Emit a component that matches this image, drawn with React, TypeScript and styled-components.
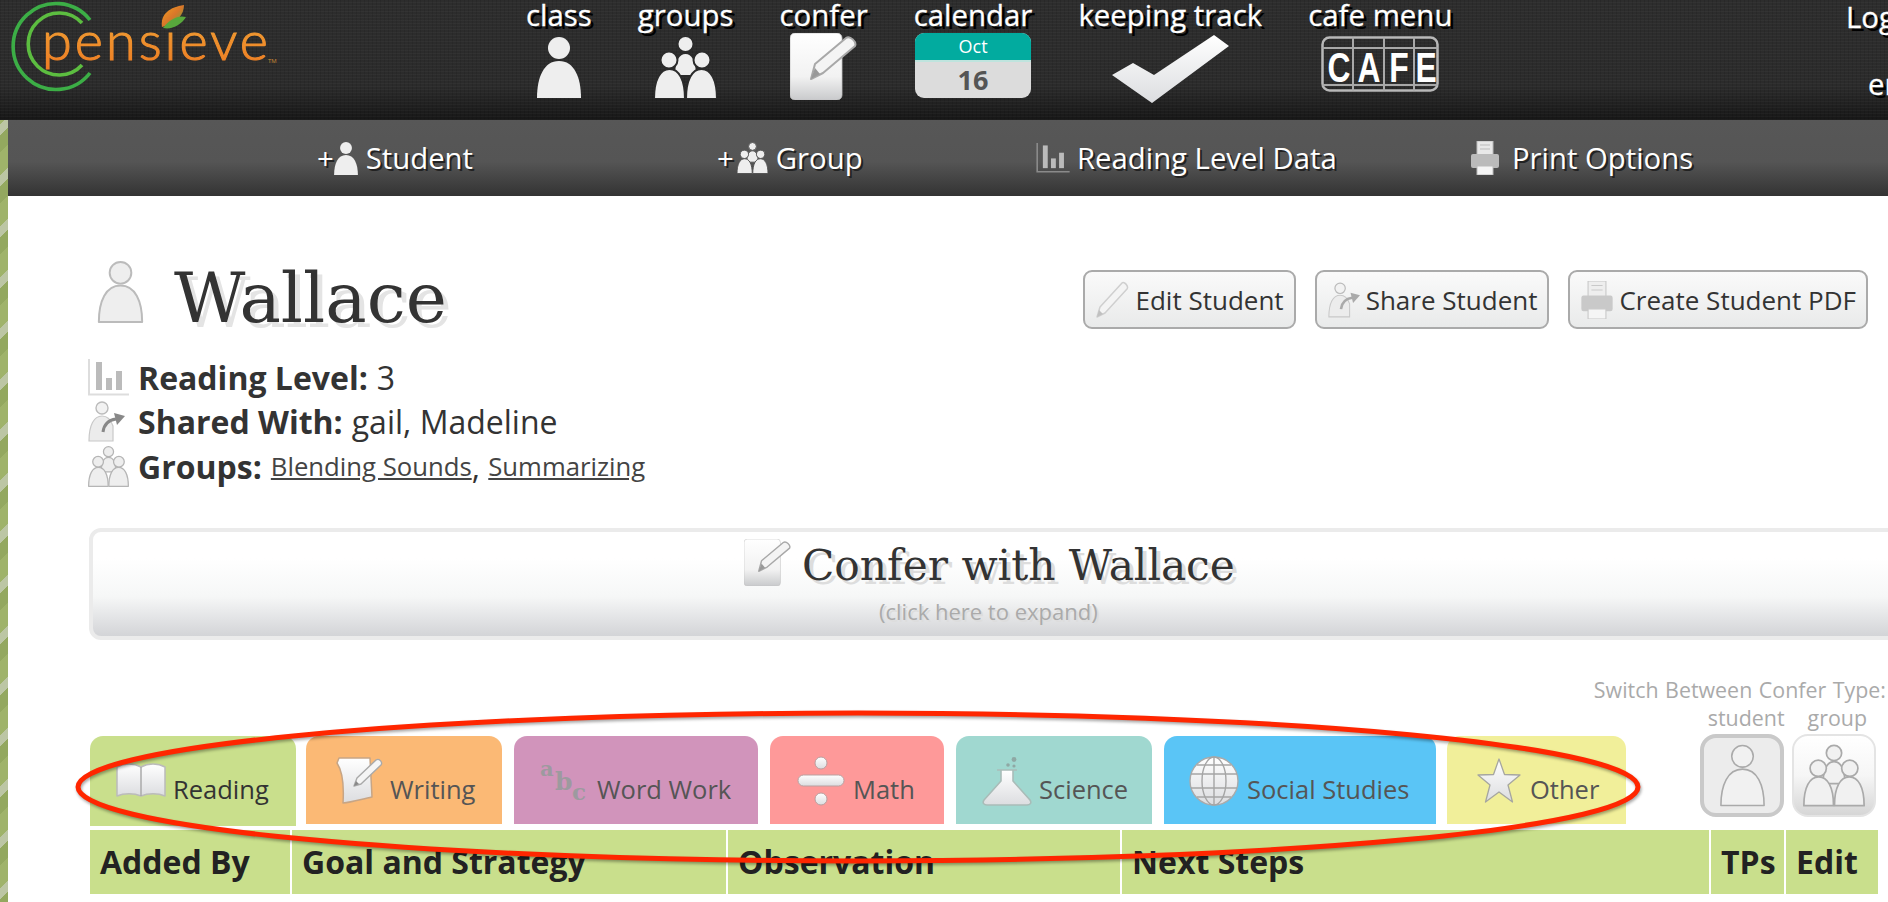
import React from "react";
import styled, { createGlobalStyle } from "styled-components";

const Global = createGlobalStyle`
  html, body { margin: 0; padding: 0; width: 1888px; height: 902px; overflow: hidden; background: #fff; }
  body { font-family: "Open Sans", "DejaVu Sans", sans-serif; color: #333; }
  svg { display: block; }
`;

const Page = styled.div`
  position: relative;
  width: 1888px;
  height: 902px;
  overflow: hidden;
  background: repeating-linear-gradient(135deg, #9fb36a 0 16px, #bcc6a4 16px 24px, #93a85f 24px 36px);
`;

const Header = styled.header`
  display: flex;
  height: 120px;
  background-image:
    repeating-linear-gradient(0deg, rgba(255,255,255,.028) 0 1px, transparent 1px 3px),
    repeating-linear-gradient(90deg, rgba(0,0,0,.1) 0 1px, transparent 1px 4px),
    linear-gradient(#2d2d2d 0, #2b2b2b 72%, #171717 100%);
`;

const LogoBox = styled.div`
  width: 526px;
  flex: none;
`;

const Nav = styled.nav`
  display: flex;
  gap: 46px;
  flex: none;
`;

const NavItem = styled.a`
  display: flex;
  flex-direction: column;
  align-items: center;
`;

const NavLabel = styled.span`
  font-size: 29.4px;
  line-height: 30px;
  color: #fff;
  white-space: nowrap;
  text-shadow: 3px 3px 0 #000;
  -webkit-text-stroke: .3px #fff;
`;

const NavIcon = styled.div<{ $top: number }>`
  margin-top: ${(p) => p.$top}px;
`;

const Calendar = styled.div`
  width: 116px;
  height: 65px;
  border-radius: 9px;
  overflow: hidden;
  background: #dcdcdc;
  display: flex;
  flex-direction: column;
  align-items: center;
`;

const CalMonth = styled.div`
  align-self: stretch;
  height: 27px;
  background: #02ab9f;
  border-bottom: 2px solid #bfe4de;
  color: #fff;
  font-size: 18px;
  line-height: 27px;
  text-align: center;
`;

const CalDay = styled.div`
  color: #555;
  font-size: 27px;
  font-weight: 700;
  line-height: 36px;
`;

const LoginBox = styled.div`
  margin-left: auto;
  padding-top: 2px;
  width: 42px;
  flex: none;
  display: flex;
  flex-direction: column;
  overflow: hidden;
  color: #fff;
  font-size: 29.4px;
  line-height: 30px;
  text-shadow: 3px 3px 0 #000;
  -webkit-text-stroke: .3px #fff;
`;

const LoginLine = styled.span<{ $indent?: number; $gap?: number }>`
  padding-left: ${(p) => p.$indent ?? 0}px;
  margin-top: ${(p) => p.$gap ?? 0}px;
  white-space: nowrap;
`;

const Main = styled.main`
  margin-left: 8px;
  height: 782px;
  background: #fff;
  overflow: hidden;
`;

const SubBar = styled.div`
  display: grid;
  grid-template-columns: 400px 319px 435px auto;
  align-items: center;
  height: 76px;
  padding-left: 309px;
  background: linear-gradient(#575757 0, #555 55%, #333 100%);
`;

const SubItem = styled.a`
  display: flex;
  align-items: center;
  color: #fff;
  font-size: 29.3px;
  line-height: 38px;
  text-shadow: 2px 2px 0 #222;
  white-space: nowrap;
`;

const SubIcon = styled.span<{ $w: number; $gap: number; $left?: number }>`
  flex: none;
  width: ${(p) => p.$w}px;
  margin-left: ${(p) => p.$left ?? 0}px;
  margin-right: ${(p) => p.$gap}px;
`;

const Content = styled.div`
  padding-left: 80px;
`;

const StudentHead = styled.section`
  display: flex;
  margin-top: 64px;
  height: 70px;
`;

const HeadIcon = styled.div`
  margin-left: 8px;
  width: 49px;
`;

const Title = styled.h1`
  margin: -8px 0 0 29px;
  font-family: "DejaVu Serif", serif;
  font-weight: 400;
  font-size: 69.5px;
  line-height: 92px;
  color: #333;
  text-shadow: 5px 5px 0 #e4e4e4;
`;

const HeadActions = styled.div`
  display: flex;
  gap: 19px;
  margin: 10px 20px 0 auto;
`;

const ActionButton = styled.button`
  display: flex;
  align-items: center;
  height: 59px;
  padding: 0 10px 0 11px;
  border: 2px solid #aaa;
  border-radius: 9px;
  background: linear-gradient(#fafafa, #e9eaea);
  font-family: inherit;
  font-size: 26px;
  color: #333;
  white-space: nowrap;
`;

const ActionIcon = styled.span`
  flex: none;
  margin-right: 6px;
`;

const Meta = styled.section`
  margin-top: 25px;
`;

const MetaRow = styled.div`
  display: flex;
  align-items: center;
  height: 44.5px;
  font-size: 32px;
  color: #333;
  white-space: nowrap;
`;

const MetaIcon = styled.span`
  flex: none;
  width: 50px;
`;

const MetaKey = styled.strong`
  font-weight: 700;
  margin-right: 9px;
`;

const MetaLink = styled.a`
  font-size: 25.7px;
  color: #444;
  text-decoration: underline;
`;

const ConferBox = styled.section`
  box-sizing: border-box;
  width: 1830px;
  height: 112px;
  margin: 39px 0 0 1px;
  border: 4px solid #ebebeb;
  border-radius: 12px;
  background: linear-gradient(#fff 0, #fff 25%, #f6f7f7 62%, #d3d4d7 100%);
  padding-left: 651px;
`;

const ConferLine = styled.div`
  display: flex;
  align-items: flex-start;
  padding-top: 7px;
`;

const ConferTitle = styled.h2`
  margin: -3px 0 0 11px;
  font-family: "DejaVu Serif", serif;
  font-weight: 400;
  font-size: 42.3px;
  line-height: 60px;
  color: #333;
  text-shadow: 4px 4px 0 #ddd;
  white-space: nowrap;
`;

const ConferHint = styled.div`
  margin: 2px 0 0 135px;
  font-size: 22px;
  line-height: 26px;
  color: #aaa;
  text-shadow: 2px 2px 0 #ddd;
`;

const TabArea = styled.section`
  display: flex;
  align-items: flex-end;
  height: 146px;
  margin-top: 40px;
  margin-left: 2px;
`;

const Tabs = styled.div`
  display: flex;
  flex: none;
  align-items: flex-start;
  gap: 12px;
  align-self: flex-end;
  height: 90px;
`;

const Tab = styled.a<{ $bg: string; $w: number; $pl: number; $active?: boolean; $shift?: number }>`
  box-sizing: border-box;
  display: flex;
  align-items: center;
  width: ${(p) => p.$w}px;
  height: ${(p) => (p.$active ? 90 : 88)}px;
  margin-left: ${(p) => p.$shift ?? 0}px;
  padding-left: ${(p) => p.$pl}px;
  padding-top: 2px;
  padding-bottom: ${(p) => (p.$active ? 2 : 0)}px;
  border-radius: 13px 13px 0 0;
  background: ${(p) => p.$bg};
  font-size: 25.5px;
  color: ${(p) => (p.$active ? "#333" : "#555")};
  white-space: nowrap;
`;

const TabIcon = styled.span<{ $gap: number }>`
  flex: none;
  margin-right: ${(p) => p.$gap}px;
`;

const TabLabel = styled.span`
  margin-top: 16px;
  line-height: 34px;
`;

const Switcher = styled.div`
  margin-left: auto;
  margin-right: 2px;
  margin-bottom: 9px;
  display: flex;
  flex-direction: column;
  align-items: flex-end;
  width: 186px;
  color: #aaa;
  font-size: 21.4px;
`;

const SwitchTitle = styled.div`
  line-height: 26px;
  word-spacing: 1px;
  white-space: nowrap;
`;

const SwitchNames = styled.div`
  display: flex;
  gap: 23px;
  margin: 2px 19px 3px 0;
  line-height: 26px;
`;

const SwitchButtons = styled.div`
  display: flex;
  gap: 8px;
  margin-right: 10px;
`;

const SwitchButton = styled.button<{ $on?: boolean }>`
  box-sizing: border-box;
  display: flex;
  align-items: center;
  justify-content: center;
  width: 84px;
  height: 83px;
  padding: 0;
  border-radius: 16px;
  border: ${(p) => (p.$on ? "4px solid #c9c9c9" : "2px solid #e4e4e4")};
  background: ${(p) => (p.$on ? "#ececec" : "linear-gradient(#fff 0, #f6f6f6 50%, #d6d6d6 100%)")};
`;

const HeadRow = styled.div`
  display: grid;
  grid-template-columns: 200px 434px 392px 587px 73px 92px;
  gap: 2px;
  width: 1788px;
  margin: 4px 0 0 2px;
`;

const HeadCell = styled.div`
  height: 64px;
  padding-left: 10px;
  background: #c9df8c;
  color: #222;
  font-size: 32px;
  font-weight: 700;
  line-height: 64px;
  white-space: nowrap;
`;

const Annotation = styled.svg`
  position: absolute;
  left: 0;
  top: 0;
  pointer-events: none;
  filter: drop-shadow(1px 2px 1.5px rgba(0, 0, 0, .35));
`;

const DefsHolder = styled.svg`
  position: absolute;
  width: 0;
  height: 0;
`;

/* ---------- drawings ---------- */

const Defs = () => (
  <DefsHolder aria-hidden>
    <defs>
      <linearGradient id="gw" x1="0" y1="0" x2="0" y2="1">
        <stop offset="0" stopColor="#ffffff" />
        <stop offset=".65" stopColor="#f2f2f2" />
        <stop offset="1" stopColor="#c9cacc" />
      </linearGradient>
      <linearGradient id="gc" x1="0" y1="0" x2="0" y2="1">
        <stop offset="0" stopColor="#fff" />
        <stop offset="1" stopColor="#dcdde0" />
      </linearGradient>
      <linearGradient id="go" x1="0" y1="0" x2="0" y2="1">
        <stop offset="0" stopColor="#f0a838" />
        <stop offset="1" stopColor="#ee7a22" />
      </linearGradient>
      <linearGradient id="gl" x1="0" y1="0" x2="1" y2="1">
        <stop offset="0" stopColor="#f5a01e" />
        <stop offset=".5" stopColor="#d9772a" />
        <stop offset="1" stopColor="#4fae3c" />
      </linearGradient>
    </defs>
  </DefsHolder>
);

const Logo = () => (
  <svg width="290" height="100" viewBox="0 0 290 100">
    <path d="M90 20 A43 43 0 1 0 90 73" fill="none" stroke="#3cae46" strokeWidth="3.6" />
    <path d="M82 23 A31 31 0 1 0 82 65" fill="none" stroke="#5cbd40" strokeWidth="3.6" />
    <text x="42" y="60" fontFamily="Lato, 'Open Sans', sans-serif" fontWeight="300" fontSize="54" letterSpacing="3" fill="url(#go)" stroke="url(#go)" strokeWidth="1.1">pensieve</text>
    <text x="268" y="63" fontFamily="'Open Sans', sans-serif" fontSize="6" fill="#c98a35">TM</text>
    <path d="M162 27 C160 14 170 7 184 5 C184 14 178 23 162 27Z" fill="url(#gl)" />
    <path d="M163 28 C170 19 178 15 186 17 C181 25 172 30 163 28Z" fill="#58a83c" />
  </svg>
);

const Person = ({ w = 44, h = 61, fill = "#eee", stroke = "none", sw = 0 }: { w?: number; h?: number; fill?: string; stroke?: string; sw?: number }) => (
  <svg width={w} height={h} viewBox={`${-sw} ${-sw} ${44 + 2 * sw} ${61 + 2 * sw}`}>
    <circle cx="22" cy="11" r="11" fill={fill} stroke={stroke} strokeWidth={sw} />
    <path d="M0 61 C0 40 7 24 22 24 C37 24 44 40 44 61Z" fill={fill} stroke={stroke} strokeWidth={sw} strokeLinejoin="round" />
  </svg>
);

const People = ({ w = 63, h = 63, fill = "#eee", stroke = "none", sw = 0, gap = "#2b2b2b" }: { w?: number; h?: number; fill?: string; stroke?: string; sw?: number; gap?: string }) => {
  const s = stroke === "none" ? gap : stroke;
  const lw = stroke === "none" ? 2 : sw;
  return (
    <svg width={w} height={h} viewBox={`${stroke === "none" ? 0 : -sw / 2} ${stroke === "none" ? 0 : -sw / 2} ${stroke === "none" ? 63 : 63 + sw} ${stroke === "none" ? 63 : 63 + sw}`}>
      <circle cx="31.5" cy="8" r="8" fill={fill} stroke={s} strokeWidth={lw} />
      <path d="M20 40 C20 24 25 17 31.5 17 C38 17 43 24 43 40Z" fill={fill} stroke={s} strokeWidth={lw} />
      <circle cx="15" cy="24" r="8.5" fill={fill} stroke={s} strokeWidth={lw} />
      <path d="M0 63 C0 44 6 33 15.5 33 C25 33 31 44 31 63Z" fill={fill} stroke={s} strokeWidth={lw} strokeLinejoin="round" />
      <circle cx="48" cy="24" r="8.5" fill={fill} stroke={s} strokeWidth={lw} />
      <path d="M32 63 C32 44 38 33 47.5 33 C57 33 63 44 63 63Z" fill={fill} stroke={s} strokeWidth={lw} strokeLinejoin="round" />
    </svg>
  );
};

const Pad = ({ w = 67, h = 67 }: { w?: number; h?: number }) => (
  <svg width={w} height={h} viewBox="0 0 67 67">
    <rect x="0" y="0" width="52" height="67" rx="5" fill="url(#gw)" stroke="#c4c4c4" strokeWidth=".8" />
    <path d="M21 46 L25 31 L56 5 C60 2 67 9 65 13 L33 40Z" fill="#f4f4f4" stroke="#a8a8a8" strokeWidth="2" strokeLinejoin="round" />
    <path d="M21 46 L25 35 L30 41Z" fill="#999" />
  </svg>
);

const Check = () => (
  <svg width="117" height="68" viewBox="0 0 117 68">
    <path d="M0 40 L21 28 L42 40 L102 0 L117 11 L40 68Z" fill="url(#gc)" />
  </svg>
);

const cafeLetters: [string, number][] = [["C", 18], ["A", 48], ["F", 78], ["E", 105]];

const Cafe = () => (
  <svg width="118" height="56" viewBox="0 0 118 56">
    <rect x="1.5" y="1.5" width="115" height="53" rx="7" fill="none" stroke="#b8b8b8" strokeWidth="2.5" />
    <path d="M1.5 12 H116.5 M1.5 49 H116.5 M32 1.5 V54.5 M63 1.5 V54.5 M93 1.5 V54.5" stroke="#a8a8a8" strokeWidth="2" fill="none" />
    {cafeLetters.map(([l, x]) => (
      <text key={l} transform={`translate(${x} 46) scale(.74 1)`} textAnchor="middle" fontFamily="'Liberation Sans', sans-serif" fontWeight="700" fontSize="43" fill="#fff">{l}</text>
    ))}
  </svg>
);

const Bars = ({ w = 41, h = 37, axis = "#ddd", bar = "#bbb" }: { w?: number; h?: number; axis?: string; bar?: string }) => (
  <svg width={w} height={h} viewBox="0 0 41 37">
    <path d="M1 0 V35.5 H41" fill="none" stroke={axis} strokeWidth="2" />
    <rect x="8" y="3" width="6" height="28" fill={bar} />
    <rect x="18" y="19" width="6" height="12" fill={bar} />
    <rect x="28" y="12" width="6" height="19" fill={bar} />
  </svg>
);

const Share = ({ w = 37, h = 41, arrow = "#888" }: { w?: number; h?: number; arrow?: string }) => (
  <svg width={w} height={h} viewBox="0 0 37 41">
    <circle cx="14" cy="7" r="6" fill="#f2f2f2" stroke="#bbb" strokeWidth="1.4" />
    <path d="M1 40 C1 24 6 15 14 15 C20 15 23 19 25 25 L25 40Z" fill="#ececec" stroke="#c8c8c8" strokeWidth="1.2" />
    <path d="M15 31 C16 23 21 19 28 18" fill="none" stroke={arrow} strokeWidth="3" />
    <path d="M26 12 L37 15 L29 24Z" fill={arrow} />
  </svg>
);

const Printer = ({ w = 28, h = 34, fill = "#e8e8e8", dark = "#bbb" }: { w?: number; h?: number; fill?: string; dark?: string }) => (
  <svg width={w} height={h} viewBox="0 0 28 34">
    <rect x="6" y="0" width="16" height="14" fill={fill} stroke={dark} />
    <path d="M9 4 H19 M9 8 H19" stroke={dark} />
    <rect x="0" y="13" width="28" height="14" rx="2" fill={dark} />
    <rect x="6" y="25" width="16" height="9" fill="#f5f5f5" stroke={dark} />
  </svg>
);

const Pencil = () => (
  <svg width="33" height="37" viewBox="0 0 33 37">
    <path d="M1 36 L4 26 L26 2 C28 0 33 5 31 8 L9 32Z" fill="#f4f4f4" stroke="#cfcfcf" strokeWidth="1.5" strokeLinejoin="round" />
    <path d="M1 36 L3 29 L7 33Z" fill="#c0c0c0" />
  </svg>
);

const Book = () => (
  <svg width="50" height="36" viewBox="0 0 50 36">
    <path d="M1 4 C8 0 18 0 25 4 C32 0 42 0 49 4 V33 C42 30 32 30 25 33 C18 30 8 30 1 33Z" fill="url(#gc)" stroke="#bbb" strokeWidth="1.5" strokeLinejoin="round" />
    <path d="M25 4 V33" stroke="#aaa" strokeWidth="1.5" />
  </svg>
);

const Paper = () => (
  <svg width="47" height="47" viewBox="0 0 47 47">
    <path d="M3 1 H34 L36 40 C26 42 16 45 7 46 C8 30 7 15 1 6Z" fill="url(#gc)" stroke="#c7a585" strokeWidth="1.5" strokeLinejoin="round" />
    <path d="M18 29 L21 21 L40 3 C43 1 47 5 45 8 L25 27Z" fill="#f5f5f5" stroke="#a9a9a9" strokeWidth="1.4" strokeLinejoin="round" />
    <path d="M18 29 L20 24 L23 27Z" fill="#888" />
  </svg>
);

const Abc = () => (
  <svg width="50" height="43" viewBox="0 0 50 43">
    <text x="0" y="17" fontFamily="'DejaVu Serif', serif" fontWeight="700" fontSize="21" fill="#9d9a9f">a</text>
    <text x="15" y="31" fontFamily="'DejaVu Serif', serif" fontWeight="700" fontSize="25" fill="#9d9a9f">b</text>
    <text x="32" y="41" fontFamily="'DejaVu Serif', serif" fontWeight="700" fontSize="23" fill="#9d9a9f">c</text>
  </svg>
);

const Divide = () => (
  <svg width="48" height="50" viewBox="0 0 48 50">
    <circle cx="24" cy="7" r="6" fill="url(#gc)" stroke="#b9a0a0" />
    <rect x="1" y="19" width="46" height="11" rx="5.5" fill="url(#gc)" stroke="#b9a0a0" />
    <circle cx="24" cy="43" r="6" fill="url(#gc)" stroke="#b9a0a0" />
  </svg>
);

const Flask = () => (
  <svg width="50" height="50" viewBox="0 0 50 50">
    <path d="M15 14 H35 M19 14 V25 L2 44 C0 47 2 49 5 49 H45 C48 49 50 47 48 44 L31 25 V14" fill="url(#gc)" stroke="#a9bcb8" strokeWidth="1.6" strokeLinejoin="round" />
    <circle cx="32" cy="3.5" r="2.4" fill="#8fa8a4" />
    <circle cx="26" cy="9" r="1.8" fill="#8fa8a4" />
    <circle cx="32" cy="10" r="1.6" fill="#8fa8a4" />
  </svg>
);

const Globe = () => (
  <svg width="50" height="50" viewBox="0 0 50 50">
    <circle cx="25" cy="25" r="24" fill="url(#gc)" stroke="#aaa" strokeWidth="1.4" />
    <path d="M25 1 V49 M2 18 H48 M2 32 H48 M8 9 H42 M8 41 H42" stroke="#a5a5a5" strokeWidth="1.4" fill="none" />
    <ellipse cx="25" cy="25" rx="12" ry="24" fill="none" stroke="#a5a5a5" strokeWidth="1.4" />
  </svg>
);

const Star = () => (
  <svg width="44" height="45" viewBox="0 0 44 45">
    <path d="M22 1 L27.5 16.5 L43 17 L31 27 L35.5 44 L22 34 L8.5 44 L13 27 L1 17 L16.5 16.5Z" fill="url(#gc)" stroke="#a6a6a0" strokeWidth="1.3" strokeLinejoin="round" />
  </svg>
);

const GW = "#eeeeee";

export default function App() {
  return (
    <Page>
      <Global />
      <Defs />
      <Header>
        <LogoBox>
          <Logo />
        </LogoBox>
        <Nav>
          <NavItem>
            <NavLabel>class</NavLabel>
            <NavIcon $top={7}><Person fill={GW} /></NavIcon>
          </NavItem>
          <NavItem>
            <NavLabel>groups</NavLabel>
            <NavIcon $top={6}><People fill={GW} /></NavIcon>
          </NavItem>
          <NavItem>
            <NavLabel>confer</NavLabel>
            <NavIcon $top={3}><Pad /></NavIcon>
          </NavItem>
          <NavItem>
            <NavLabel>calendar</NavLabel>
            <NavIcon $top={3}>
              <Calendar>
                <CalMonth>Oct</CalMonth>
                <CalDay>16</CalDay>
              </Calendar>
            </NavIcon>
          </NavItem>
          <NavItem>
            <NavLabel>keeping track</NavLabel>
            <NavIcon $top={5}><Check /></NavIcon>
          </NavItem>
          <NavItem>
            <NavLabel>cafe menu</NavLabel>
            <NavIcon $top={6}><Cafe /></NavIcon>
          </NavItem>
        </Nav>
        <LoginBox>
          <LoginLine>Log</LoginLine>
          <LoginLine $indent={22} $gap={37}>en</LoginLine>
        </LoginBox>
      </Header>
      <Main>
        <SubBar>
          <SubItem>
            +<SubIcon $w={24} $gap={8}><Person w={24} h={33} fill="#eee" /></SubIcon>Student
          </SubItem>
          <SubItem>
            +<SubIcon $w={31} $gap={8} $left={3}><People w={31} h={34} fill="#eee" gap="#555" /></SubIcon>Group
          </SubItem>
          <SubItem>
            <SubIcon $w={34} $gap={7}><Bars w={34} h={30} axis="#8a8a8a" bar="#bbb" /></SubIcon>Reading Level Data
          </SubItem>
          <SubItem>
            <SubIcon $w={28} $gap={13}><Printer /></SubIcon>Print Options
          </SubItem>
        </SubBar>
        <Content>
          <StudentHead>
            <HeadIcon>
              <Person w={49} h={64} fill="#eee" stroke="#bbb" sw={2} />
            </HeadIcon>
            <Title>Wallace</Title>
            <HeadActions>
              <ActionButton>
                <ActionIcon><Pencil /></ActionIcon>Edit Student
              </ActionButton>
              <ActionButton>
                <ActionIcon><Share w={32} h={38} arrow="#aaa" /></ActionIcon>Share Student
              </ActionButton>
              <ActionButton>
                <ActionIcon><Printer w={32} h={38} fill="#eee" dark="#c9c9c9" /></ActionIcon>Create Student PDF
              </ActionButton>
            </HeadActions>
          </StudentHead>
          <Meta>
            <MetaRow>
              <MetaIcon><Bars /></MetaIcon>
              <MetaKey>Reading Level:</MetaKey>3
            </MetaRow>
            <MetaRow>
              <MetaIcon><Share /></MetaIcon>
              <MetaKey>Shared With:</MetaKey>gail, Madeline
            </MetaRow>
            <MetaRow>
              <MetaIcon><People w={41} h={41} fill="#eee" stroke="#b5b5b5" sw={2} /></MetaIcon>
              <MetaKey>Groups:</MetaKey>
              <MetaLink>Blending Sounds</MetaLink>,&nbsp;<MetaLink>Summarizing</MetaLink>
            </MetaRow>
          </Meta>
          <ConferBox>
            <ConferLine>
              <Pad w={47} h={47} />
              <ConferTitle>Confer with Wallace</ConferTitle>
            </ConferLine>
            <ConferHint>(click here to expand)</ConferHint>
          </ConferBox>
          <TabArea>
            <Tabs>
              <Tab $bg="#c9df8c" $w={206} $pl={26} $active>
                <TabIcon $gap={7}><Book /></TabIcon><TabLabel>Reading</TabLabel>
              </Tab>
              <Tab $bg="#fbb975" $w={196} $pl={30} $shift={-2}>
                <TabIcon $gap={7}><Paper /></TabIcon><TabLabel>Writing</TabLabel>
              </Tab>
              <Tab $bg="#d194bb" $w={244} $pl={26}>
                <TabIcon $gap={7}><Abc /></TabIcon><TabLabel>Word Work</TabLabel>
              </Tab>
              <Tab $bg="#fe9999" $w={174} $pl={27}>
                <TabIcon $gap={8}><Divide /></TabIcon><TabLabel>Math</TabLabel>
              </Tab>
              <Tab $bg="#a0d8d0" $w={196} $pl={26}>
                <TabIcon $gap={7}><Flask /></TabIcon><TabLabel>Science</TabLabel>
              </Tab>
              <Tab $bg="#5ac5f6" $w={272} $pl={25}>
                <TabIcon $gap={8}><Globe /></TabIcon><TabLabel>Social Studies</TabLabel>
              </Tab>
              <Tab $bg="#f1ef9a" $w={179} $pl={30} $shift={-1}>
                <TabIcon $gap={9}><Star /></TabIcon><TabLabel>Other</TabLabel>
              </Tab>
            </Tabs>
            <Switcher>
              <SwitchTitle>Switch Between Confer Type:</SwitchTitle>
              <SwitchNames>
                <span>student</span>
                <span>group</span>
              </SwitchNames>
              <SwitchButtons>
                <SwitchButton $on><Person w={47} h={63} fill="#f1f1f1" stroke="#aaa" sw={1.6} /></SwitchButton>
                <SwitchButton><People w={62} h={63} fill="#f1f1f1" stroke="#aaa" sw={1.8} /></SwitchButton>
              </SwitchButtons>
            </Switcher>
          </TabArea>
          <HeadRow>
            <HeadCell>Added By</HeadCell>
            <HeadCell>Goal and Strategy</HeadCell>
            <HeadCell>Observation</HeadCell>
            <HeadCell>Next Steps</HeadCell>
            <HeadCell>TPs</HeadCell>
            <HeadCell>Edit</HeadCell>
          </HeadRow>
        </Content>
      </Main>
      <Annotation width="1888" height="902" viewBox="0 0 1888 902">
        <ellipse cx="858" cy="787" rx="780" ry="74" fill="none" stroke="#ff2600" strokeWidth="5" />
      </Annotation>
    </Page>
  );
}
